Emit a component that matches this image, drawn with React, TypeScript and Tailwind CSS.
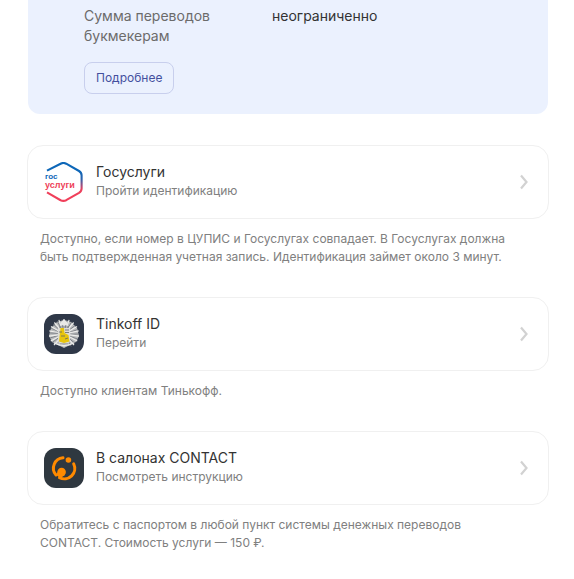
import type { ReactNode } from "react";

function GosuslugiLogo() {
  return (
    <svg viewBox="0 0 40 40" className="size-10" aria-hidden="true">
      <defs>
        <linearGradient id="gos" gradientUnits="userSpaceOnUse" x1="0" y1="9" x2="0" y2="32">
          <stop offset="0" stopColor="#0d67b8" />
          <stop offset="0.35" stopColor="#2b62ad" />
          <stop offset="0.8" stopColor="#e8415f" />
          <stop offset="1" stopColor="#f03f5a" />
        </linearGradient>
      </defs>
      <path
        d="M3 8.600 16.600 1.700Q19.400.3 22.200 1.700L35 9Q37.600 10.600 37.600 13.400V26.400Q37.600 29.200 35 30.800L22.200 38.200Q19.400 39.600 16.600 38.200L3 30.400"
        fill="none"
        stroke="url(#gos)"
        strokeWidth="2.100"
      />
      <text x="1" y="17" fill="#0d67b8" className="font-['Liberation_Sans',sans-serif] text-[8px] font-bold">гос</text>
      <text x="1" y="26" fill="#ee3f58" className="font-['Liberation_Sans',sans-serif] text-[9px] font-bold">услуги</text>
    </svg>
  );
}

const mantleAngles = [-168, -150, -130, -110, -90, -70, -50, -30, -12, 8, 28, 48, 132, 152, 172];

function TinkoffLogo() {
  return (
    <svg viewBox="0 0 40 40" className="size-10" aria-hidden="true">
      <rect width="40" height="40" rx="12" fill="#2f3848" />
      <path
        d="M20 6l7 2 6 6 2 8-3 6-6 3-6 3-6-3-6-3-3-6 2-8 6-6z"
        fill="#b9bbbc"
      />
      {mantleAngles.map((a) => (
        <g key={a} transform={`rotate(${a} 20 20)`}>
          <path d="M26 21.500l8 1.500" stroke="#777b82" strokeWidth="0.8" />
          <path d="M26 20h9" stroke="#ededeb" strokeWidth="1.200" />
        </g>
      ))}
      <path d="M17 11V8L20 5.500 23 8v3z" fill="#e9e9e6" />
      <path d="M14 14h12v12q-1 4-6 7-5-3-6-7z" fill="#dddcd8" />
      <path d="M16.500 14H20l.5 5 4 2 1 6.500-5.500 1.500-5-1.500z" fill="#e7c50d" />
      <path d="M15 13h10M15 18h3M21 16h4M21 18.500h4M17 22h4M21 25l3-1M16 30h8" stroke="#62666c" strokeWidth="0.8" />
      <path d="M10 29q10 5 20 0" fill="none" stroke="#ededeb" strokeWidth="1.200" />
    </svg>
  );
}

function ContactLogo() {
  return (
    <svg viewBox="0 0 40 40" className="size-10" aria-hidden="true">
      <rect width="40" height="40" rx="12" fill="#2f3840" />
      <path
        d="M19 9.800A10.400 10.400 0 0 0 12 27"
        fill="none"
        stroke="#ff8a00"
        strokeWidth="3"
        strokeLinecap="round"
      />
      <path
        d="M29.700 15.800A10.400 10.400 0 0 1 15.500 29.600"
        fill="none"
        stroke="#ff8a00"
        strokeWidth="3"
        strokeLinecap="round"
      />
      <path d="M12 27L14.500 22.500L21 27L16.500 30z" fill="#ff8a00" />
      <circle cx="17.600" cy="24" r="4.300" fill="#ff8a00" />
      <circle cx="24.400" cy="12" r="2.800" fill="#ff8a00" />
    </svg>
  );
}

interface OptionProps {
  logo: ReactNode;
  title: string;
  action: string;
  note: string;
}

function Option({ logo, title, action, note }: OptionProps) {
  return (
    <section>
      <button
        type="button"
        className="flex w-full items-center gap-3 rounded-2xl border border-[#f0f0f0] bg-white p-4 text-left"
      >
        {logo}
        <span className="flex flex-1 flex-col pb-0.5">
          <span className="text-sm leading-5 text-[#333333]">{title}</span>
          <span className="text-xs leading-[18px] text-[#808080]">{action}</span>
        </span>
        <svg viewBox="0 0 16 16" className="size-4" aria-hidden="true">
          <path d="M5 1.500l5.500 6.500L5 14.500" fill="none" stroke="#d2d2d2" strokeWidth="2.200" />
        </svg>
      </button>
      <p className="mt-[11px] pr-8 pl-[13px] text-xs leading-[18px] text-[#808080]">{note}</p>
    </section>
  );
}

export default function App() {
  return (
    <main className="bg-white pr-[25px] pb-6 pl-[27px] font-['Inter','Liberation_Sans',sans-serif]">
      <section className="mx-px rounded-b-xl bg-[#ebf1fe] px-14 pt-1.5 pb-5">
        <dl className="flex text-sm leading-5">
          <dt className="w-[188px] pr-8 text-[#6b6b6b]">Сумма переводов букмекерам</dt>
          <dd className="text-[#333333]">неограниченно</dd>
        </dl>
        <button
          type="button"
          className="mt-4 h-8 rounded-lg border border-[#c8cfed] px-[11px] text-xs text-[#44509e]"
        >
          Подробнее
        </button>
      </section>
      <div className="mt-[31px] flex flex-col gap-[31px]">
        <Option
          logo={<GosuslugiLogo />}
          title="Госуслуги"
          action="Пройти идентификацию"
          note="Доступно, если номер в ЦУПИС и Госуслугах совпадает. В Госуслугах должна быть подтвержденная учетная запись. Идентификация займет около 3 минут."
        />
        <Option
          logo={<TinkoffLogo />}
          title="Tinkoff ID"
          action="Перейти"
          note="Доступно клиентам Тинькофф."
        />
        <Option
          logo={<ContactLogo />}
          title="В салонах CONTACT"
          action="Посмотреть инструкцию"
          note="Обратитесь с паспортом в любой пункт системы денежных переводов CONTACT. Стоимость услуги — 150 ₽."
        />
      </div>
    </main>
  );
}
